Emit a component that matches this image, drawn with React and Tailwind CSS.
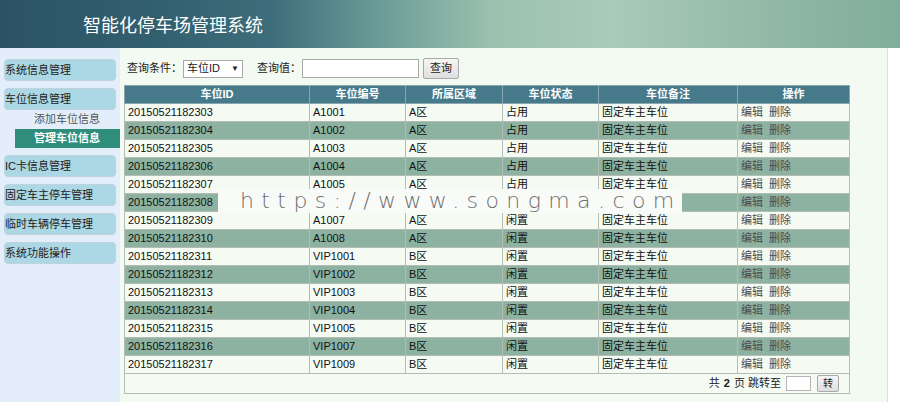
import React from 'react';

const menu = [
  { label: '系统信息管理' },
  {
    label: '车位信息管理',
    children: [
      { label: '添加车位信息' },
      { label: '管理车位信息', active: true },
    ],
  },
  { label: 'IC卡信息管理' },
  { label: '固定车主停车管理' },
  { label: '临时车辆停车管理' },
  { label: '系统功能操作' },
];

const rows = [
  ['20150521182303', 'A1001', 'A区', '占用'],
  ['20150521182304', 'A1002', 'A区', '占用'],
  ['20150521182305', 'A1003', 'A区', '占用'],
  ['20150521182306', 'A1004', 'A区', '占用'],
  ['20150521182307', 'A1005', 'A区', '占用'],
  ['20150521182308', 'A1006', 'A区', '占用'],
  ['20150521182309', 'A1007', 'A区', '闲置'],
  ['20150521182310', 'A1008', 'A区', '闲置'],
  ['20150521182311', 'VIP1001', 'B区', '闲置'],
  ['20150521182312', 'VIP1002', 'B区', '闲置'],
  ['20150521182313', 'VIP1003', 'B区', '闲置'],
  ['20150521182314', 'VIP1004', 'B区', '闲置'],
  ['20150521182315', 'VIP1005', 'B区', '闲置'],
  ['20150521182316', 'VIP1007', 'B区', '闲置'],
  ['20150521182317', 'VIP1009', 'B区', '闲置'],
];

const heads = ['车位ID', '车位编号', '所属区域', '车位状态', '车位备注', '操作'];
const widths = ['w-[185px]', 'w-[96px]', 'w-[97px]', 'w-[96px]', 'w-[139px]', 'w-[112px]'];

const Sidebar = () => (
  <aside className="w-[120px] shrink-0 bg-[#e3eefa] pt-[11px] flex flex-col gap-[7px]">
    {menu.map((m) => (
      <div key={m.label}>
        <div className="ml-[4px] w-[112px] h-[22px] flex items-center rounded-[4px] bg-[#acd7e4] border border-[#bfd3dd] text-[11px] text-[#222] leading-none">
          {m.label}
        </div>
        {m.children && (
          <div className="flex flex-col">
            {m.children.map((c) =>
              c.active ? (
                <div key={c.label} className="ml-[15px] h-[19px] flex items-center pl-[19px] bg-[#2f8d7c] text-white font-bold text-[11px]">
                  {c.label}
                </div>
              ) : (
                <div key={c.label} className="h-[19px] flex items-center pl-[34px] text-[11px] text-[#555]">
                  {c.label}
                </div>
              )
            )}
          </div>
        )}
      </div>
    ))}
  </aside>
);

const Toolbar = () => (
  <div className="flex items-center h-[21px] mt-[10px] ml-[7px] text-[11px] text-[#222]">
    <span className="w-[56px]">查询条件：</span>
    <div className="w-[60px] h-[18px] bg-white border border-[#a9a9a9] flex items-center justify-between px-[3px]">
      <span>车位ID</span>
      <span className="text-[8px]">▼</span>
    </div>
    <span className="ml-[14px] w-[45px]">查询值：</span>
    <div className="w-[117px] h-[19px] bg-white border border-[#a9a9a9]" />
    <button className="ml-[4px] w-[36px] h-[21px] border border-[#a9a9a9] rounded-[2px] bg-[linear-gradient(#f6f6f6,#dedede)] text-[11px] text-[#222]">
      查询
    </button>
  </div>
);

const Grid = () => (
  <table className="mt-[6px] ml-[4px] w-[726px] border-collapse border border-[#a8aea8] text-[11px] leading-none table-fixed">
    <thead>
      <tr className="bg-[#467a8b] h-[18px]">
        {heads.map((h, i) => (
          <th key={h} className={`${widths[i]} border border-[#8aa6b0] text-white font-bold text-center`}>
            {h}
          </th>
        ))}
      </tr>
    </thead>
    <tbody>
      {rows.map((r, i) => (
        <tr key={r[0]} className={`h-[18px] ${i % 2 ? 'bg-[#8eb2a1]' : 'bg-[#f5faf3]'}`}>
          {r.map((c, j) => (
            <td key={j} className="border border-[#b3bdb6] pl-[3px] text-[#111]">{c}</td>
          ))}
          <td className="border border-[#b3bdb6] pl-[3px] text-[#111]">固定车主车位</td>
          <td className="border border-[#b3bdb6] pl-[3px] text-[#4a4a4a]">
            编辑<span className="ml-[6px]">删除</span>
          </td>
        </tr>
      ))}
      <tr className="h-[20px] bg-[#f5faf3]">
        <td colSpan={6} className="border border-[#b3bdb6]">
          <div className="flex items-center justify-end pr-[10px] text-[#222]">
            共 <b className="mx-[4px]">2</b> 页 跳转至
            <div className="ml-[5px] w-[25px] h-[15px] bg-white border border-[#b5b5b5]" />
            <button className="ml-[6px] w-[22px] h-[17px] border border-[#a9a9a9] rounded-[2px] bg-[linear-gradient(#f6f6f6,#dedede)] text-[10px]">
              转
            </button>
          </div>
        </td>
      </tr>
    </tbody>
  </table>
);

export default function App() {
  return (
    <div className="w-[900px] h-[402px] overflow-hidden flex flex-col bg-white font-['Liberation_Sans','Noto_Sans_CJK_SC',sans-serif]">
      <header className="h-[48px] shrink-0 flex items-center pl-[83px] pt-[4px] bg-[linear-gradient(90deg,#2b5364_0%,#33606f_18%,#3d6d7a_30%,#6b9b97_42%,#9cc2af_55%,#a9cbb8_68%,#93b9a7_85%,#80ad9b_100%)]">
        <h1 className="text-white text-[18px] font-normal">智能化停车场管理系统</h1>
      </header>
      <div className="flex flex-1">
        <Sidebar />
        <main className="relative w-[768px] bg-[#f3faf1] border-r border-[#dcdcdc]">
          <Toolbar />
          <Grid />
          <div className="absolute left-[98px] top-[141px] w-[464px] h-[24px] bg-[#f9fbf9] flex items-center pl-[22px] text-[22px] text-[#6f6f6f] tracking-[7.4px] font-['DejaVu_Sans',sans-serif] font-extralight leading-none">
            https://www.songma.com
          </div>
        </main>
      </div>
    </div>
  );
}
